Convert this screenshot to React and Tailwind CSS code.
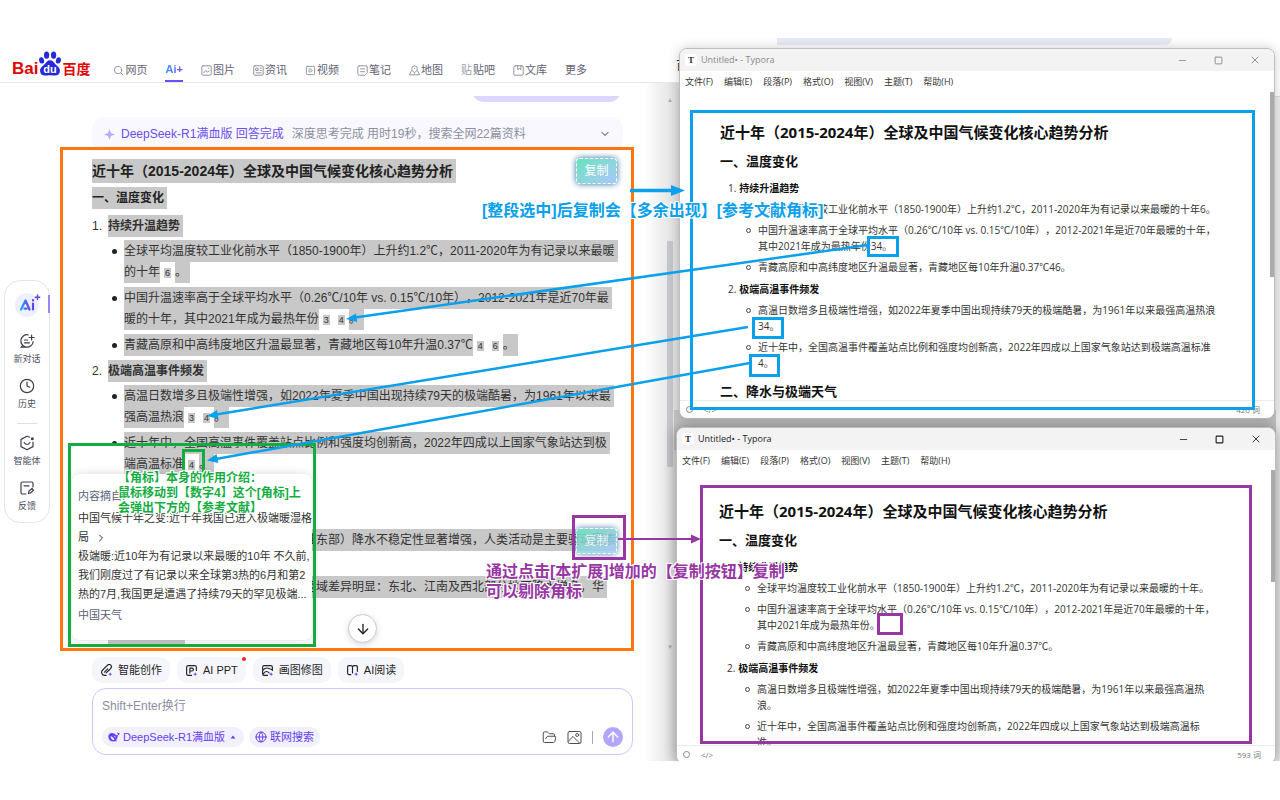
import React from "react";
import {
  Search, Image as ImageIcon, SquarePlay, ArrowDown, ArrowUp, ChevronDown, ChevronRight,
  Clock, FolderOpen, Globe, Minus, Square, X,
} from "lucide-react";

const ui = "font-['Liberation_Sans','Noto_Sans_CJK_SC',sans-serif]";
const doc = "font-['Open_Sans','Noto_Sans_CJK_SC',sans-serif]";

function Logo() {
  return (
    <a href="#home" aria-label="Baidu 百度" className="flex items-end leading-none text-[#e10602]">
      <span className="text-[17px] font-bold leading-[17px]">Bai</span>
      <svg viewBox="0 0 24 26" className="h-[26px] w-6" aria-hidden="true">
        <g fill="#2529d8">
          <ellipse cx="8.6" cy="4.2" rx="2.6" ry="3.6" />
          <ellipse cx="15.6" cy="4.2" rx="2.6" ry="3.6" />
          <ellipse cx="3.6" cy="9.4" rx="2.5" ry="3.2" transform="rotate(-12 3.6 9.4)" />
          <ellipse cx="20.4" cy="9.4" rx="2.5" ry="3.2" transform="rotate(12 20.4 9.4)" />
          <path d="M12 9.2c-2.6 0-3.700 2.100-5.200 3.800-1.900 2.100-4.800 3.600-4.700 7 .1 3.100 2.400 4.700 5.200 4.600 1.800 0 3-.3 4.700-.3s2.900.3 4.700.3c2.800.1 5.100-1.500 5.200-4.600.1-3.400-2.800-4.900-4.700-7C15.700 11.300 14.600 9.200 12 9.200z" />
        </g>
        <text x="12" y="22" textAnchor="middle" fontSize="11" fontWeight="700" fill="#fff">du</text>
      </svg>
      <span className="text-[14px] font-bold leading-[16px]">百度</span>
    </a>
  );
}

const navItems = [
  ["图片", <path key="p" d="M3.500 2h9A1.500 1.500 0 0 1 14 3.500v9a1.500 1.500 0 0 1-1.500 1.500h-9A1.500 1.500 0 0 1 2 12.500v-9A1.500 1.500 0 0 1 3.500 2zM4.500 11l2.500-3 2 2 2.500-1.500M10.500 5.200h.5" />],
  ["资讯", <path key="p" d="M3.500 2h9A1.500 1.500 0 0 1 14 3.500v9a1.500 1.500 0 0 1-1.500 1.500h-9A1.500 1.500 0 0 1 2 12.500v-9A1.500 1.500 0 0 1 3.500 2zM5 5h2.500v3H5zM10 5h1.500M10 8h1.500M5 11h6.500" />],
  ["视频", null],
  ["笔记", <path key="p" d="M4 2h8.500A1.500 1.500 0 0 1 14 3.500V11l-3 3H4a2 2 0 0 1-2-2V4a2 2 0 0 1 2-2zM5.500 6h5M5.500 9.500h5" />],
  ["地图", <path key="p" d="M8 11C5.500 9 4.500 7.500 4.500 5.500a3.500 3.500 0 0 1 7 0C11.500 7.500 10.500 9 8 11zM8 5.500v.3M4 8.500 1.500 13.500h13L12 8.500" />],
  ["贴吧", null],
  ["文库", <path key="p" d="M4 2h8.500A1.500 1.500 0 0 1 14 3.500v9a1.500 1.500 0 0 1-1.500 1.500h-9A1.500 1.500 0 0 1 2 12.500V4a2 2 0 0 1 2-2zM7 2v5l2-1.500L11 7V2" />],
];

function Header() {
  return (
    <header className="flex h-[45px] items-end gap-[23px] border-b border-[#e6e6e8] pl-3">
      <div className="pb-[5px]"><Logo /></div>
      <nav className="flex items-end gap-[18px] text-[11px] leading-4 whitespace-nowrap text-[#5f6373]">
        <a href="#web" className="flex items-center gap-px pb-1"><Search className="size-[11px] text-[#8b8f9c]" />网页</a>
        <a href="#ai" className="border-b-2 border-[#6a4df5] pb-[3px] font-bold">
          <span className="bg-gradient-to-r from-[#1e9bff] to-[#6f3ff5] bg-clip-text text-transparent">Ai+</span>
        </a>
        {navItems.map(([label, shape]) => (
          <a key={label} href="#nav" className="flex items-center gap-px pb-1">
            {label === "视频" && <SquarePlay className="size-[11px] text-[#8b8f9c]" />}
            {label === "贴吧" && <span className="text-[#9a9daa]">贴</span>}
            {shape && <svg viewBox="1 1 14 14" className="size-[11px]" fill="none" stroke="#8b8f9c" strokeWidth="1.200" strokeLinecap="round" strokeLinejoin="round">{shape}</svg>}
            {label}
          </a>
        ))}
        <a href="#more" className="pb-1">更多</a>
      </nav>
    </header>
  );
}

function NewChatIcon() {
  return (
    <svg viewBox="0 0 16 16" className="size-4" fill="none" stroke="#3c3f4c" strokeWidth="1.200" strokeLinecap="round">
      <path d="M9 1.800A6.200 6.200 0 1 0 14.200 8.500M3.500 12.500 2.200 14.200H8M5.500 7h3M5.500 9.800h5M12.600 2v5M10.100 4.500h5" />
    </svg>
  );
}
function AgentIcon() {
  return (
    <svg viewBox="0 0 16 16" className="size-4" fill="none" stroke="#3c3f4c" strokeWidth="1.200" strokeLinecap="round" strokeLinejoin="round">
      <path d="M10.500 2.200 8 1.200 2 4.400v7.200l6 3.200 6-3.200V7M5.200 7.600Q8 11.400 11 7.600" />
      <circle cx="13.300" cy="3.800" r=".9" fill="#3c3f4c" />
    </svg>
  );
}
function FeedbackIcon() {
  return (
    <svg viewBox="0 0 16 16" className="size-4" fill="none" stroke="#3c3f4c" strokeWidth="1.200" strokeLinecap="round" strokeLinejoin="round">
      <path d="M7 14H3.500A1.500 1.500 0 0 1 2 12.500v-9A1.500 1.500 0 0 1 3.500 2h9A1.500 1.500 0 0 1 14 3.500V7M5 5.800h5M9.500 13.500l.5-2.500 3-2.500 1.500 1.800-3 2.700z" />
    </svg>
  );
}

function SideButton({ icon, children }) {
  return (
    <button type="button" className="flex flex-col items-center gap-[2px] text-[9px] leading-4 text-[#4a4d5c]">
      {icon}
      {children}
    </button>
  );
}

function Sidebar() {
  return (
    <aside className="relative mt-[197px] ml-1 flex w-[46px] shrink-0 flex-col items-center self-start rounded-[16px] border border-[#e4e4ea] bg-white pt-3 pb-2">
      <button type="button" aria-label="Ai" className="flex size-6 items-center justify-center rounded-full bg-[#edf1ff]">
        <svg viewBox="0 0 24 24" className="size-6 overflow-visible" fill="none" strokeLinecap="round" strokeLinejoin="round">
          <defs>
            <linearGradient id="ai" x1="0" x2="1"><stop stopColor="#15a5ff" /><stop offset="1" stopColor="#6c3ff5" /></linearGradient>
          </defs>
          <path d="M6 16.500 10.500 7.500 14.500 16.500M9.500 15.700h2" stroke="url(#ai)" strokeWidth="2.200" />
          <path d="M18 10.500v6M18 7.200v.2" stroke="#6044f5" strokeWidth="2.200" />
          <path d="M22.500 2v4.400M20.300 4.200h4.400" stroke="#6044f5" strokeWidth="1.400" />
        </svg>
      </button>
      <span className="absolute top-[14px] -right-px h-[18px] w-[2px] bg-[#9a86fb]" />
      <div className="mt-4 flex flex-col items-center gap-[11px]">
        <SideButton icon={<NewChatIcon />}>新对话</SideButton>
        <SideButton icon={<Clock className="size-4 text-[#3c3f4c]" strokeWidth={1.8} />}>历史</SideButton>
        <span className="h-px w-5 bg-[#dedee4]" />
        <SideButton icon={<AgentIcon />}>智能体</SideButton>
        <SideButton icon={<FeedbackIcon />}>反馈</SideButton>
      </div>
    </aside>
  );
}

const Hl = ({ children, end }) => (
  <span className={end ? "bg-[#c8c8c8] py-1 pr-[3px]" : "bg-[#c8c8c8] py-1"}>{children}</span>
);
const Ref = ({ children }) => (
  <a href="#ref" className="mx-1 inline-block w-[7px] bg-[#c8c8c8] text-center text-[9px] leading-[10px] text-[#333]">{children}</a>
);

function Bullet({ children }) {
  return (
    <li className="flex gap-[7px] whitespace-nowrap">
      <span className="mt-2 ml-[4px] size-[5px] shrink-0 rounded-full bg-[#222]" />
      <div>{children}</div>
    </li>
  );
}

function CopyButton({ className }) {
  return (
    <button type="button" className={"absolute h-[26px] w-[41px] rounded-[4px] border border-dashed border-white bg-gradient-to-br from-[#62e3bd] to-[#a9c6fb] text-[12px] text-white shadow-[0_0_6px_#2f6f9c] " + className}>
      复制
    </button>
  );
}

function Answer() {
  return (
    <article className="mt-2 flex flex-col gap-[5px] text-[12px] leading-[21px] text-[#333]">
      <h1 className="text-[14px] leading-6 font-bold text-[#222]"><Hl end>近十年（2015-2024年）全球及中国气候变化核心趋势分析</Hl></h1>
      <h2 className="font-bold text-[#222]"><Hl end>一、温度变化</Hl></h2>
      <ol className="mt-[2px] flex flex-col gap-[5px]">
        <li className="flex flex-col gap-1">
          <div className="flex"><span className="w-4">1.</span><strong><Hl end>持续升温趋势</Hl></strong></div>
          <ul className="flex flex-col gap-[5px] pl-4">
            <Bullet>
              <Hl end>全球平均温度较工业化前水平（1850-1900年）上升约1.2℃，2011-2020年为有记录以来最暖</Hl><br />
              <Hl>的十年</Hl><Ref>6</Ref><Hl end>。</Hl>
            </Bullet>
            <Bullet>
              <Hl end>中国升温速率高于全球平均水平（0.26℃/10年 vs. 0.15℃/10年），2012-2021年是近70年最</Hl><br />
              <Hl>暖的十年，其中2021年成为最热年份</Hl><Ref>3</Ref><Ref>4</Ref><Hl end>。</Hl>
            </Bullet>
            <Bullet><Hl>青藏高原和中高纬度地区升温最显著，青藏地区每10年升温0.37℃</Hl><Ref>4</Ref><Ref>6</Ref><Hl end>。</Hl></Bullet>
          </ul>
        </li>
        <li className="flex flex-col gap-1">
          <div className="flex"><span className="w-4">2.</span><strong><Hl end>极端高温事件频发</Hl></strong></div>
          <ul className="flex flex-col gap-[5px] pl-4">
            <Bullet>
              <Hl end>高温日数增多且极端性增强，如2022年夏季中国出现持续79天的极端酷暑，为1961年以来最</Hl><br />
              <Hl>强高温热浪</Hl><Ref>3</Ref><Ref>4</Ref><Hl end>。</Hl>
            </Bullet>
            <Bullet>
              <Hl end>近十年中，全国高温事件覆盖站点比例和强度均创新高，2022年四成以上国家气象站达到极</Hl><br />
              <Hl>端高温标准</Hl><Ref>4</Ref><Hl end>。</Hl>
            </Bullet>
          </ul>
        </li>
      </ol>
      <ul className="mt-[50px] flex flex-col gap-[5px] pl-4">
        <Bullet><Hl>极端强降水频发，全国（华北、江淮东部）降水不稳定性显著增强，人类活动是主要驱动因素</Hl><br /><Hl>之一。</Hl></Bullet>
        <Bullet><Hl end>年降水量呈波动变化，百年尺度上区域差异明显：东北、江南及西北部分地区降水增多，华</Hl><br /><Hl>北减少。</Hl></Bullet>
      </ul>
      <div className="ml-4 h-[21px] w-[77px] bg-[#c8c8c8]" />
    </article>
  );
}

function Popover() {
  return (
    <section className="absolute top-[474px] left-[72px] w-[240px] rounded-[8px] bg-white px-[6px] pt-[13px] pb-[15px] text-[11px] leading-[19px] whitespace-nowrap text-[#333] shadow-[0_0_10px_rgba(0,0,0,0.15)]">
      <p className="text-[#5a5f78]">内容摘自:</p>
      <a href="#source" className="mt-[3px] block">中国气候十年之变:近十年我国已进入极端暖湿格<br />
        <span className="flex items-center gap-[6px]">局<ChevronRight className="size-3" /></span>
      </a>
      <p>极端暖:近10年为有记录以来最暖的10年 不久前,<br />我们刚度过了有记录以来全球第3热的6月和第2<br />热的7月,我国更是遭遇了持续79天的罕见极端...</p>
      <p className="mt-[2px] text-[#5a5f78]">中国天气</p>
    </section>
  );
}

const chipIcons = [
  "M9.500 6 5.500 10M12 6.800l1.200-1.300a2.800 2.800 0 0 0-4-4L3.300 7.400a3.800 3.800 0 0 0 2 6.600h2.200M12 6.800 7.500 11",
  "M8 14H4a2 2 0 0 1-2-2V4a2 2 0 0 1 2-2h8a2 2 0 0 1 2 2v4M6 11V5h2.500a1.800 1.800 0 0 1 0 3.600H6",
  "M8 14H4a2 2 0 0 1-2-2V4a2 2 0 0 1 2-2h8a2 2 0 0 1 2 2v4M2.500 7.500C6 3.500 9 5 13.500 7M3 12c2-3.500 5-3.500 7-1",
  "M6 13H3.500A1.500 1.500 0 0 1 2 11.500v-8A1.500 1.500 0 0 1 3.500 2h2A2 2 0 0 1 8 4v7M8 4a2 2 0 0 1 2.200-2h2.300A1.500 1.500 0 0 1 14 3.500V9",
];

function Composer() {
  return (
    <div className="pb-[6px]">
      <div className="flex gap-[7px] pt-[6px] text-[11px] leading-[26px] text-[#1f1f1f]">
        {["智能创作", "AI PPT", "画图修图", "AI阅读"].map((label, i) => (
          <button key={label} type="button" className="relative flex items-center gap-[5px] rounded-[10px] bg-[#f5f6fb] px-2">
            <svg viewBox="0 0 16 16" className="size-[13px]" fill="none" stroke="#222" strokeWidth="1.400" strokeLinecap="round" strokeLinejoin="round">
              <path d={chipIcons[i]} />
              <path d="M12.500 10l.7 1.800 1.800.7-1.800.7-.7 1.800-.7-1.800-1.800-.7 1.800-.7z" stroke="none" fill="#6a42f5" />
            </svg>
            {label}
            {i === 1 && <span className="absolute top-0 right-0 size-1 rounded-full bg-[#f51c28]" />}
          </button>
        ))}
      </div>
      <form className="mt-[5px] rounded-[14px] border border-[#cfc6fb] bg-white px-[9px] pt-2 pb-[7px]">
        <input aria-label="Shift+Enter换行" placeholder="Shift+Enter换行" className="block h-[18px] w-full text-[12px] outline-none placeholder:text-[#8b8f9f]" />
        <div className="mt-3 flex items-center text-[11px] leading-5 text-[#6340f2]">
          <button type="button" className="flex items-center gap-[3px] rounded-full bg-[#f2f0fd] px-[6px]">
            <svg viewBox="0 0 14 12" className="h-[10px] w-[12px]"><path fill="#6340f2" d="M13.700 1c-1 .6-1.700.2-2.300-.8-.5 1.300-.2 2 .4 2.700-.6 1.400-1.700 1.300-2.600.4C7.800 1.900 6 .8 3.800 1.200 1.400 1.600-.1 3.600.2 6.200c.4 3.200 3 5.300 5.900 5.300 1 0 2-.2 2.700-.7l1.800.5-1-1.600c1.300-1.500 1.900-3.400 2-5.400 1.300-.6 2.100-1.700 2.100-3.300zM6.900 9.800C4.500 9.600 3.200 7.900 2.800 5.200c1.900.1 3.200 1.600 4.600 3.400zM9 7.200 6.600 4.700c1.200-.4 2.300.7 2.400 2.500z" /></svg>
            <span>DeepSeek-R1满血版</span>
            <svg viewBox="0 0 6 4" className="h-1 w-[10px]"><path d="M3 .5 5.500 3.500H.5z" fill="#6340f2" /></svg>
          </button>
          <button type="button" className="ml-[5px] flex items-center gap-[3px] rounded-full bg-[#f2f0fd] px-[6px]">
            <Globe className="size-3" />联网搜索
          </button>
          <div className="ml-auto flex items-center gap-[10px] text-[#4b4e5c]">
            <button type="button" aria-label="文件"><FolderOpen className="size-[15px]" strokeWidth={1.6} /></button>
            <button type="button" aria-label="图片">
              <svg viewBox="0 0 15 15" className="size-[15px]" fill="none" stroke="#4b4e5c" strokeLinecap="round" strokeLinejoin="round"><rect x="1" y="1.500" width="13" height="12" rx="1.500" /><path d="M1.500 11 6 6.500l6.500 6.500" /><circle cx="10.200" cy="5" r="1.500" /></svg>
            </button>
            <span className="h-[13px] w-px bg-[#a7a8b2]" />
            <button type="submit" aria-label="发送" className="flex size-5 items-center justify-center rounded-full bg-[#b2a5fc] text-white"><ArrowUp className="size-4" strokeWidth={2.2} /></button>
          </div>
        </div>
      </form>
    </div>
  );
}

const Dot = ({ children }) => (
  <li className="flex gap-[7px] whitespace-nowrap">
    <span className="mt-[6px] size-[5px] shrink-0 rounded-full border border-[#444]" />
    <div>{children}</div>
  </li>
);

function DocBody({ className, first, second, third, fourth, fifth }) {
  return (
    <div className={"min-h-0 flex-1 overflow-hidden text-[10px] leading-4 whitespace-nowrap text-[#333] " + className}>
      <h1 className="mt-[27px] text-[15px] leading-6 font-bold text-[#111]">近十年（2015-2024年）全球及中国气候变化核心趋势分析</h1>
      <h2 className="mt-[7px] text-[13px] leading-5 font-bold text-[#111]">一、温度变化</h2>
      <ol className="mt-[9px] flex flex-col gap-[6px] pl-2">
        <li>
          <div className="flex gap-[3px]"><span>1.</span><strong className="text-[#111]">持续升温趋势</strong></div>
          <ul className="mt-[5px] flex flex-col gap-[5px] pl-[18px]"><Dot>{first}</Dot><Dot>{second}</Dot><Dot>{third}</Dot></ul>
        </li>
        <li>
          <div className="flex gap-[3px]"><span>2.</span><strong className="text-[#111]">极端高温事件频发</strong></div>
          <ul className="mt-[5px] flex flex-col gap-[5px] pl-[18px]"><Dot>{fourth}</Dot><Dot>{fifth}</Dot></ul>
        </li>
      </ol>
      <h2 className="mt-[10px] text-[13px] leading-5 font-bold text-[#111]">二、降水与极端天气</h2>
    </div>
  );
}

function TyporaWindow({ active, count, className, barClass, children }) {
  return (
    <section className={`absolute flex flex-col overflow-hidden rounded-[8px] border border-[#bdbdbd] bg-white ${doc} ${className}`}>
      <div className={`flex h-[22px] shrink-0 items-center bg-[#f3f3f3] pr-[13px] pl-[5px] text-[9px] ${active ? "text-[#222]" : "text-[#888]"}`}>
        <span className="mr-1 flex size-3 items-center justify-center rounded-[3px] bg-white font-['Liberation_Serif',serif] text-[9px] leading-none font-bold text-[#333]">T</span>
        Untitled• - Typora
        <div className="ml-auto flex items-center gap-[26px]">
          <button type="button" aria-label="最小化"><Minus className="size-[11px]" strokeWidth={1.8} /></button>
          <button type="button" aria-label="最大化"><Square className="size-[9px]" strokeWidth={active ? 3 : 2.4} /></button>
          <button type="button" aria-label="关闭"><X className="size-3" strokeWidth={1.8} /></button>
        </div>
      </div>
      <nav className="flex h-[22px] shrink-0 items-center gap-[11px] pl-[5px] text-[9px] text-[#333]">
        {["文件(F)", "编辑(E)", "段落(P)", "格式(O)", "视图(V)", "主题(T)", "帮助(H)"].map((m) => <button key={m} type="button">{m}</button>)}
      </nav>
      {children}
      <footer className="flex h-[18px] shrink-0 items-center border-t border-[#ececec] pr-[14px] pl-[6px] text-[8px] text-[#777]">
        <span className="size-[7px] rounded-full border border-[#888]" />
        <span className="ml-[11px]">&lt;/&gt;</span>
        <span className="ml-auto">{count} 词</span>
      </footer>
      <span className={"absolute right-0 w-1 bg-[#ababab] " + barClass} />
    </section>
  );
}

const halo = "[text-shadow:0_0_2px_#fff,1px_1px_0_#fff,-1px_-1px_0_#fff,1px_-1px_0_#fff,-1px_1px_0_#fff]";

function Annotations() {
  const box = "pointer-events-none absolute border-[3px] ";
  return (
    <>
      <div className={box + "top-[147px] left-[60px] h-[504px] w-[574px] border-[#ff7512]"} />
      <div className={box + "top-[443px] left-[68px] h-[204px] w-[248px] border-[#13ad3f]"} />
      <div className={box + "top-[449px] left-[182px] h-[26px] w-[23px] border-b-0 border-[#13ad3f]"} />
      <div className={box + "top-[110px] left-[690px] h-[300px] w-[565px] border-[#0aa0eb]"} />
      <div className={box + "top-[236px] left-[867px] h-[21px] w-[32px] border-[#0aa0eb]"} />
      <div className={box + "top-[317px] left-[752px] h-[22px] w-[32px] border-[#0aa0eb]"} />
      <div className={box + "top-[354px] left-[749px] h-[23px] w-[31px] border-[#0aa0eb]"} />
      <div className={box + "top-[485px] left-[700px] h-[259px] w-[552px] border-[#9836a4]"} />
      <div className={box + "top-[613px] left-[877px] h-[22px] w-[26px] border-[#9836a4]"} />
      <div className={box + "top-[515px] left-[572px] h-[45px] w-[54px] border-[#9836a4]"} />
      <svg className="pointer-events-none absolute top-0 left-0 h-[800px] w-[1280px]" viewBox="0 0 1280 800" fill="none" aria-hidden="true">
        <g stroke="#0aa0eb" strokeWidth="2.500">
          <path d="M630 190.500H675" strokeWidth="3.500" />
          <path d="M868 245 355 317.500M748 327 216 414.500M750 363 216 459" />
        </g>
        <g fill="#0aa0eb">
          <path d="M685 190.500 671 185v11z" />
          <path d="M346 319 356 313.400 357.200 322z" />
          <path d="M207 416 217 410 218.400 419z" />
          <path d="M207 460.500 216.500 454 218.300 463z" />
        </g>
        <path d="M618 539H694" stroke="#9836a4" strokeWidth="2" />
        <path d="M701 539 691 534.500v9z" fill="#9836a4" />
      </svg>
      <p className={`absolute top-[200px] left-[482px] text-[16px] leading-[22px] font-bold whitespace-nowrap text-[#0aa0eb] ${halo}`}>[整段选中]后复制会【多余出现】[参考文献角标]</p>
      <p className={`absolute top-[562px] left-[486px] text-[16px] leading-5 font-bold whitespace-nowrap text-[#9836a4] ${halo}`}>通过点击[本扩展]增加的【复制按钮】复制<br />可以剔除角标</p>
      <p className={`absolute top-[471px] left-[118px] text-[12px] leading-[15px] font-bold whitespace-nowrap text-[#13ad3f] ${halo}`}>【角标】本身的作用介绍：<br />鼠标移动到【数字4】这个[角标]上<br />会弹出下方的【参考文献】</p>
    </>
  );
}

export default function App() {
  return (
    <main lang="zh-CN" className={`min-h-screen bg-white [text-spacing-trim:space-all] ${ui}`}>
      <div className="relative isolate overflow-hidden pt-[38px]">
        <div className="w-[53.125%]">
          <Header />
          <div className="flex border-r border-[#dedede] bg-gradient-to-r from-white from-95% to-[#dcdcdc]">
            <Sidebar />
            <div className="min-w-0 flex-1 pr-[46px] pl-[42px]">
              <div className="h-[568px] overflow-hidden pt-[13px]">
                <div className="mr-3 ml-auto flex h-[6px] w-[149px] items-end overflow-hidden"><div className="h-6 w-full shrink-0 rounded-[12px] bg-[#dcd7fe]" /></div>
                <button type="button" className="mt-[15px] flex h-[34px] w-[531px] max-w-full items-center rounded-[12px] bg-[#f8f8fe] pr-3 pl-3 text-[12px] whitespace-nowrap">
                  <svg viewBox="0 0 12 12" className="mr-[6px] size-[11px]" aria-hidden="true"><path fill="#b9adfa" d="M6 0 7.600 4.400 12 6 7.600 7.600 6 12 4.400 7.600 0 6 4.400 4.400z" /></svg>
                  <span className="text-[#6a4df0]">DeepSeek-R1满血版 回答完成</span>
                  <span className="ml-2 text-[#8c90a0]">深度思考完成 用时19秒，搜索全网22篇资料</span>
                  <ChevronDown className="ml-auto size-3 text-[#333]" />
                </button>
                <Answer />
              </div>
              <Composer />
            </div>
          </div>
        </div>

        <span className="absolute top-[241px] left-[667px] h-[226px] w-[6px] bg-[#c5c6cb]" />
        <span className="absolute top-[96px] left-[667px] text-[6px] text-[#aaa]">▲</span>
        <span className="absolute top-[643px] left-[667px] text-[6px] text-[#aaa]">▼</span>
        <span className="absolute top-[58px] left-[676px] text-[12px] leading-4 text-[#333]">百</span>
        <div className="absolute top-[38px] right-[108px] left-[777px] h-[7px] rounded-br-[12px] bg-[#e8eaf5]" />
        <div className="absolute top-[96px] right-0 bottom-0 left-[680px] border-t border-[#ddd] bg-[#ededed]" />
        <div className="absolute top-[410px] right-1 left-[674px] h-[40px] bg-[#c4c4c4]" />

        <TyporaWindow count={420} className="top-[48px] right-[5px] left-[679px] h-[371px] shadow-[0_0_12px_rgba(0,0,0,0.2)]" barClass="top-[43px] h-[185px]">
          <DocBody
            className="px-10"
            first="全球平均温度较工业化前水平（1850-1900年）上升约1.2℃，2011-2020年为有记录以来最暖的十年6。"
            second={<>中国升温速率高于全球平均水平（0.26℃/10年 vs. 0.15℃/10年），2012-2021年是近70年最暖的十年，<br />其中2021年成为最热年份34。</>}
            third="青藏高原和中高纬度地区升温最显著，青藏地区每10年升温0.37℃46。"
            fourth={<>高温日数增多且极端性增强，如2022年夏季中国出现持续79天的极端酷暑，为1961年以来最强高温热浪<br />34。</>}
            fifth={<>近十年中，全国高温事件覆盖站点比例和强度均创新高，2022年四成以上国家气象站达到极端高温标准<br />4。</>}
          />
        </TyporaWindow>
        <TyporaWindow active count={593} className="top-[427px] right-1 left-[676px] h-[337px] shadow-[0_0_14px_rgba(0,0,0,0.4)]" barClass="top-[42px] h-[112px]">
          <DocBody
            className="px-[42px]"
            first="全球平均温度较工业化前水平（1850-1900年）上升约1.2℃，2011-2020年为有记录以来最暖的十年。"
            second={<>中国升温速率高于全球平均水平（0.26℃/10年 vs. 0.15℃/10年），2012-2021年是近70年最暖的十年，<br />其中2021年成为最热年份。</>}
            third="青藏高原和中高纬度地区升温最显著，青藏地区每10年升温0.37℃。"
            fourth={<>高温日数增多且极端性增强，如2022年夏季中国出现持续79天的极端酷暑，为1961年以来最强高温热<br />浪。</>}
            fifth={<>近十年中，全国高温事件覆盖站点比例和强度均创新高，2022年四成以上国家气象站达到极端高温标<br />准。</>}
          />
        </TyporaWindow>

        <Popover />
        <button type="button" aria-label="滚动到底部" className="absolute top-[614px] left-[348px] flex size-[29px] items-center justify-center rounded-full border border-[#c9c9d4] bg-white shadow-[0_2px_6px_rgba(0,0,0,0.15)]"><ArrowDown className="size-4 text-[#222]" /></button>
        <CopyButton className="top-[158px] left-[576px]" />
        <CopyButton className="top-[528px] left-[576px] opacity-85" />
        <Annotations />
      </div>
    </main>
  );
}
